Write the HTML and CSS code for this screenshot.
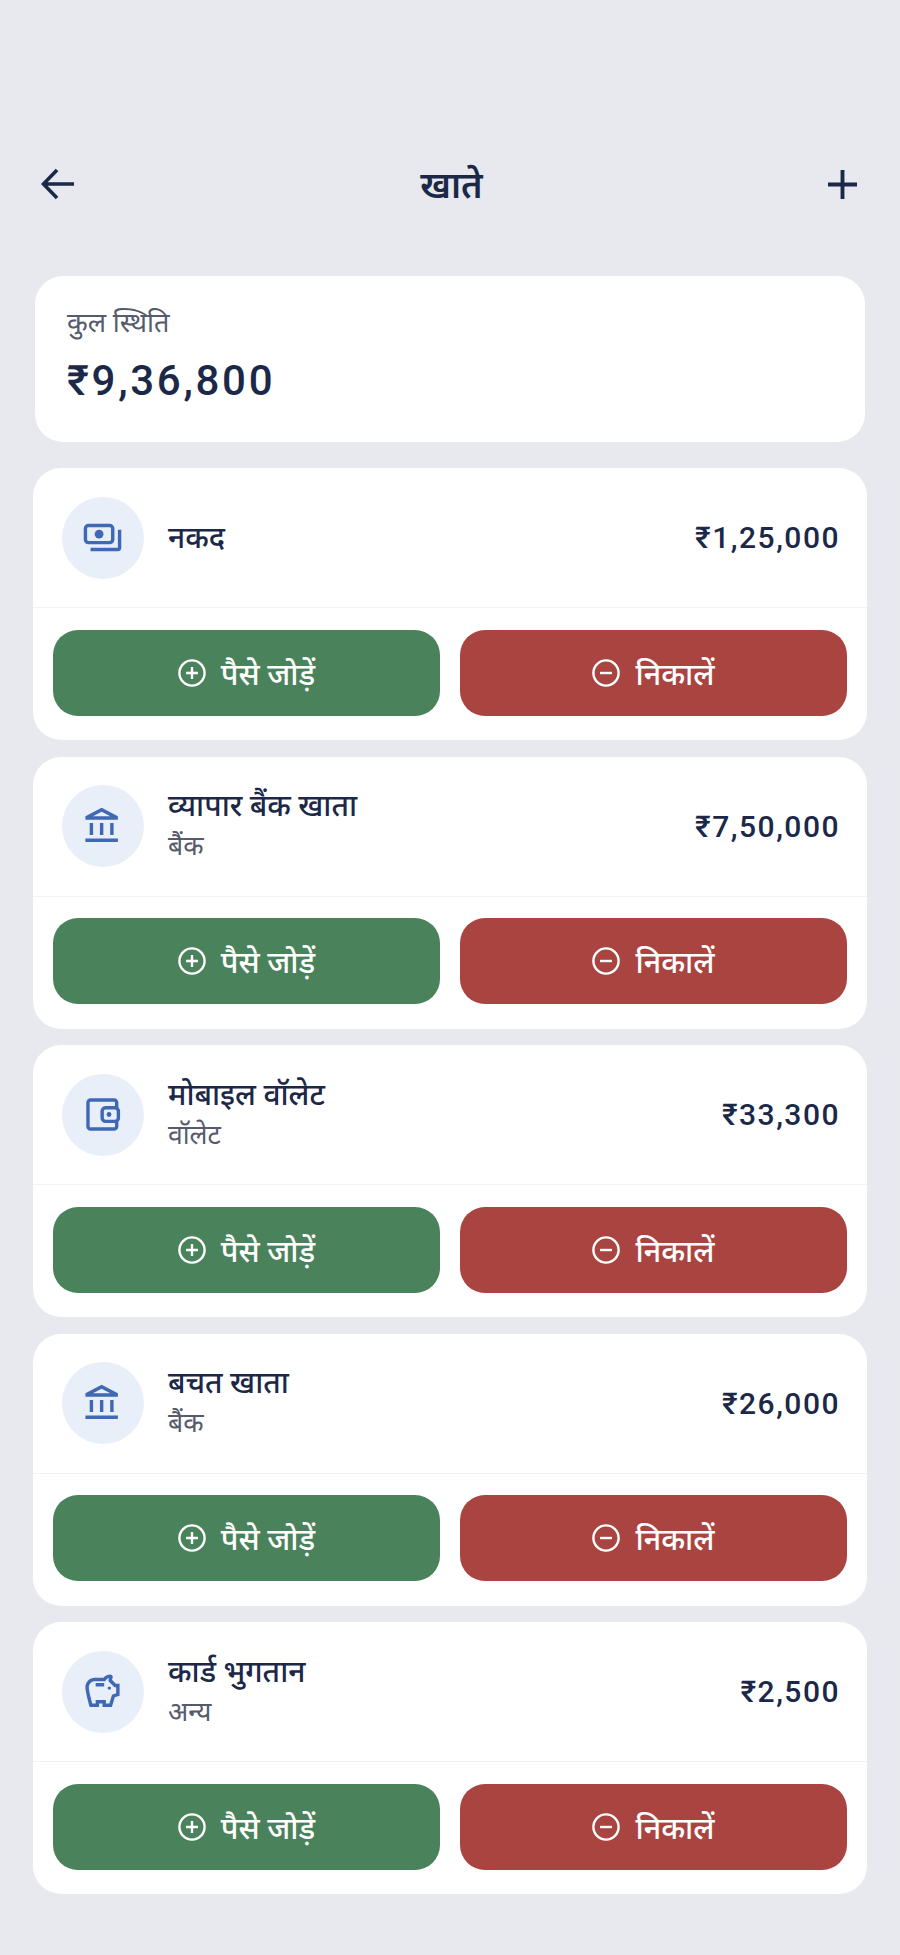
FILE: index.html
```html
<!DOCTYPE html>
<html lang="hi">
<head>
    <meta charset="UTF-8">
    <meta name="viewport" content="width=device-width, initial-scale=1.0">
    <title>खाते</title>
    <link rel="stylesheet" href="styles.css">
</head>
<body>
    <svg class="sprites" xmlns="http://www.w3.org/2000/svg">
        <symbol id="icon-add" viewBox="0 0 28 28">
            <circle cx="14" cy="14" r="12.6" fill="none" stroke="currentColor" stroke-width="2.4"/>
            <path d="M14 8v12M8 14h12" fill="none" stroke="currentColor" stroke-width="2.4"/>
        </symbol>
        <symbol id="icon-remove" viewBox="0 0 28 28">
            <circle cx="14" cy="14" r="12.6" fill="none" stroke="currentColor" stroke-width="2.4"/>
            <path d="M8 14h12" fill="none" stroke="currentColor" stroke-width="2.4"/>
        </symbol>
        <symbol id="icon-bank" viewBox="0 0 24 24">
            <path d="M6.5 10h-2v7h2v-7zm6 0h-2v7h2v-7zm8.5 9H2v2h19v-2zm-2.5-9h-2v7h2v-7zM11.500 1L2 6v2h19V6l-9.500-5zM6.440 6l5.060-2.670L16.560 6H6.440z"/>
        </symbol>
    </svg>

    <header class="topbar">
        <svg class="topbar-icon" viewBox="0 0 36 34" fill="none" stroke="currentColor" stroke-width="3.8">
            <path d="M35 17H3M17 2L2.500 17 17 32"/>
        </svg>
        <h1>खाते</h1>
        <svg class="topbar-icon plus" viewBox="0 0 30 30" fill="none" stroke="currentColor" stroke-width="4">
            <path d="M15 0v30M0 15h30"/>
        </svg>
    </header>

    <main class="container">
        <section class="summary">
            <p>कुल स्थिति</p>
            <div class="summary-total">₹9,36,800</div>
        </section>

        <article class="account">
            <div class="account-row">
                <div class="account-icon">
                    <svg viewBox="0 0 24 24">
                        <rect x="2" y="5" width="16" height="10" rx="1.800" fill="none" stroke="currentColor" stroke-width="2"/>
                        <circle cx="10" cy="10" r="2.600" fill="currentColor"/>
                        <path d="M22 7.500V18a1 1 0 0 1-1 1H5" fill="none" stroke="currentColor" stroke-width="2"/>
                    </svg>
                </div>
                <div class="account-info">
                    <div class="account-name">नकद</div>
                </div>
                <div class="account-amount">₹1,25,000</div>
            </div>
            <div class="account-actions">
                <a class="button add"><svg><use href="#icon-add"/></svg>पैसे जोड़ें</a>
                <a class="button withdraw"><svg><use href="#icon-remove"/></svg>निकालें</a>
            </div>
        </article>

        <article class="account">
            <div class="account-row">
                <div class="account-icon"><svg><use href="#icon-bank"/></svg></div>
                <div class="account-info">
                    <div class="account-name">व्यापार बैंक खाता</div>
                    <div class="account-type">बैंक</div>
                </div>
                <div class="account-amount">₹7,50,000</div>
            </div>
            <div class="account-actions">
                <a class="button add"><svg><use href="#icon-add"/></svg>पैसे जोड़ें</a>
                <a class="button withdraw"><svg><use href="#icon-remove"/></svg>निकालें</a>
            </div>
        </article>

        <article class="account">
            <div class="account-row">
                <div class="account-icon">
                    <svg viewBox="0 0 24 24">
                        <path d="M20.300 8V5a1.500 1.500 0 0 0-1.500-1.500H5A1.500 1.500 0 0 0 3.500 5v14A1.500 1.500 0 0 0 5 20.500h13.800a1.500 1.500 0 0 0 1.500-1.500v-3" fill="none" stroke="currentColor" stroke-width="2"/>
                        <rect x="11.800" y="8" width="9.500" height="8" rx="2" fill="none" stroke="currentColor" stroke-width="2"/>
                        <circle cx="15.800" cy="12" r="1.400" fill="currentColor"/>
                    </svg>
                </div>
                <div class="account-info">
                    <div class="account-name">मोबाइल वॉलेट</div>
                    <div class="account-type">वॉलेट</div>
                </div>
                <div class="account-amount">₹33,300</div>
            </div>
            <div class="account-actions">
                <a class="button add"><svg><use href="#icon-add"/></svg>पैसे जोड़ें</a>
                <a class="button withdraw"><svg><use href="#icon-remove"/></svg>निकालें</a>
            </div>
        </article>

        <article class="account">
            <div class="account-row">
                <div class="account-icon"><svg><use href="#icon-bank"/></svg></div>
                <div class="account-info">
                    <div class="account-name">बचत खाता</div>
                    <div class="account-type">बैंक</div>
                </div>
                <div class="account-amount">₹26,000</div>
            </div>
            <div class="account-actions">
                <a class="button add"><svg><use href="#icon-add"/></svg>पैसे जोड़ें</a>
                <a class="button withdraw"><svg><use href="#icon-remove"/></svg>निकालें</a>
            </div>
        </article>

        <article class="account">
            <div class="account-row">
                <div class="account-icon">
                    <svg viewBox="0 0 24 24">
                        <path d="M15 10c0-.55.45-1 1-1s1 .45 1 1-.45 1-1 1-1-.45-1-1zM8 9h5V7H8v2zm14-1.500v6.970l-2.820.94L17.500 21H12v-2h-2v2H4.500S2 12.540 2 9.500 4.460 4 7.500 4h5c.91-1.210 2.360-2 4-2 .83 0 1.500.67 1.500 1.500 0 .21-.04.4-.12.58-.14.32-.26.68-.32 1.070l2.270 2.350H22zm-2 2h-1l-3.500-3.500c0-.65.09-1.290.26-1.910-.97.25-1.760.97-2.090 1.910H7.500C5.570 6 4 7.570 4 9.500c0 1.880 1.220 6.650 2.010 9.500H8v-2h6v2h2.010l1.550-5.150 2.440-.82V9.500z"/>
                    </svg>
                </div>
                <div class="account-info">
                    <div class="account-name">कार्ड भुगतान</div>
                    <div class="account-type">अन्य</div>
                </div>
                <div class="account-amount">₹2,500</div>
            </div>
            <div class="account-actions">
                <a class="button add"><svg><use href="#icon-add"/></svg>पैसे जोड़ें</a>
                <a class="button withdraw"><svg><use href="#icon-remove"/></svg>निकालें</a>
            </div>
        </article>
    </main>
</body>
</html>
```

FILE: styles.css
```css
:root {
    --ink: #1b2848;
    --muted: #555b6c;
    --page: #e7e9ee;
    --green: #4a825c;
    --red: #a94440;
    --blue: #3f68b5;
    --tint: #e9eff9;
    --line: #f1f2f4;
}

* {
    box-sizing: border-box;
}

body {
    font-family: Roboto, "Noto Sans", "Noto Sans Devanagari", sans-serif;
    margin: 0;
    height: 1955px;
    background-color: var(--page);
    color: var(--ink);
}

.sprites {
    display: none;
}

.topbar {
    display: flex;
    align-items: center;
    justify-content: space-between;
    height: 70px;
    margin-top: 149px;
    padding: 0 43px 0 41px;
}

.topbar h1 {
    margin: 0;
    font-size: 36px;
    font-weight: 600;
}

.topbar-icon {
    width: 34px;
    height: 32px;
}

.topbar-icon.plus {
    width: 29px;
    height: 29px;
}

.container {
    display: flex;
    flex-direction: column;
    gap: 16.500px;
    padding: 57px 33px 0;
}

.summary {
    height: 166px;
    margin: 0 2px 9.500px;
    padding: 28px 32px;
    background: white;
    border-radius: 28px;
}

.summary p {
    margin: 0;
    font-size: 27px;
    line-height: 38px;
    color: var(--muted);
}

.summary-total {
    margin-top: 14px;
    font-size: 42px;
    font-weight: 500;
    line-height: 50px;
    letter-spacing: 2.700px;
}

.account {
    height: 272px;
    background: white;
    border-radius: 28px;
}

.account-row {
    display: flex;
    align-items: center;
    gap: 24.500px;
    height: 140px;
    padding: 0 27px 0 28.500px;
    border-bottom: 1.500px solid var(--line);
}

.account-icon {
    display: flex;
    flex: none;
    align-items: center;
    justify-content: center;
    width: 82px;
    height: 82px;
    border-radius: 50%;
    background-color: var(--tint);
    color: var(--blue);
}

.account-icon svg {
    width: 41px;
    height: 41px;
    fill: currentColor;
}

.account-info {
    flex: 1;
}

.account-name {
    font-size: 30px;
    font-weight: 500;
    line-height: 40px;
}

.account-type {
    font-size: 26.500px;
    line-height: 40px;
    color: var(--muted);
}

.account-amount {
    font-size: 30px;
    font-weight: 500;
    letter-spacing: 1.500px;
}

.account-actions {
    display: grid;
    grid-template-columns: 1fr 1fr;
    gap: 20px;
    padding: 21.500px 20px 0;
}

.button {
    display: flex;
    align-items: center;
    justify-content: center;
    gap: 15px;
    height: 86px;
    border-radius: 25px;
    color: white;
    font-size: 30.500px;
    font-weight: 500;
}

.button svg {
    width: 28px;
    height: 28px;
}

.add {
    background-color: var(--green);
}

.withdraw {
    background-color: var(--red);
}
```
